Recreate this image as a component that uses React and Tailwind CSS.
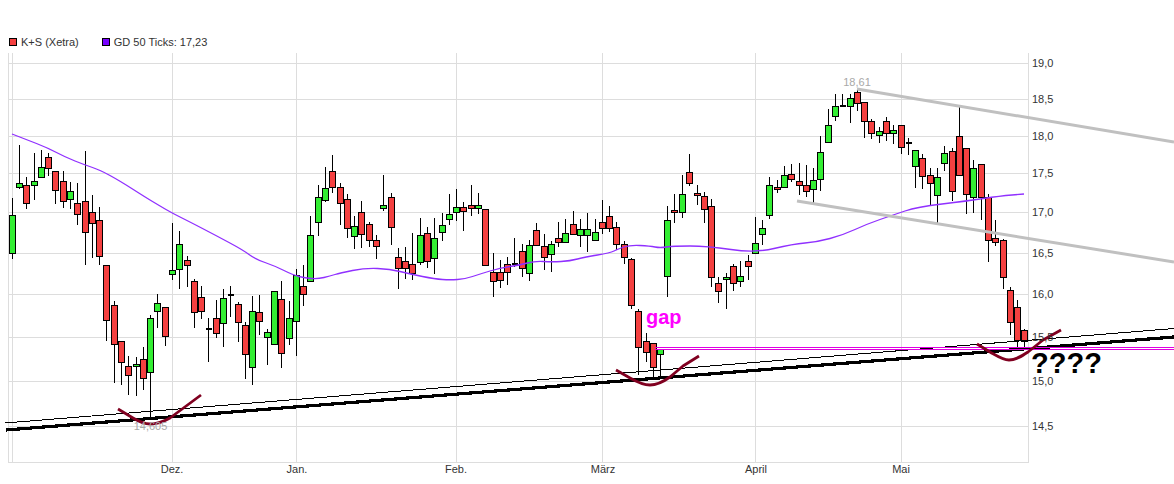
import React from "react";

// x, wick top, wick bottom, body top, body bottom, colour
const candles = [
  [12.5, 198, 259, 215, 253, "g"], [19.5, 145, 189, 183, 187, "g"], [26.5, 177, 209, 185, 203, "r"],
  [34.5, 153, 200, 181, 185, "g"], [41.5, 150, 177, 167, 177, "g"], [48.5, 153, 176, 157, 168, "r"],
  [55.5, 171, 204, 171, 190, "r"], [63.5, 171, 208, 181, 201, "r"], [70.5, 182, 209, 191, 199, "g"],
  [77.5, 183, 225, 203, 214, "r"], [85.5, 151, 265, 201, 232, "r"], [92.5, 195, 258, 212, 223, "r"],
  [99.5, 207, 265, 220, 256, "r"], [106.5, 265, 341, 265, 320, "r"], [114.5, 301, 383, 305, 344, "r"],
  [121.5, 341, 385, 341, 362, "r"], [128.5, 356, 395, 366, 375, "r"], [136.5, 357, 396, 364, 366, "g"],
  [143.5, 347, 390, 359, 378, "r"], [150.5, 315, 418, 318, 372, "g"], [157.5, 294, 328, 303, 311, "g"],
  [165.5, 307, 346, 307, 336, "r"], [172.5, 223, 280, 270, 274, "g"], [179.5, 231, 289, 244, 269, "g"],
  [187.5, 256, 287, 260, 265, "r"], [194.5, 279, 328, 281, 312, "r"], [201.5, 286, 319, 297, 311, "r"],
  [208.5, 318, 362, 329, 329, "d"], [216.5, 300, 338, 318, 333, "r"], [223.5, 289, 347, 298, 323, "g"],
  [230.5, 286, 317, 295, 295, "d"], [238.5, 302, 342, 304, 322, "r"], [245.5, 322, 379, 325, 354, "r"],
  [252.5, 296, 385, 311, 367, "g"], [259.5, 295, 335, 312, 321, "r"], [267.5, 329, 365, 332, 337, "g"],
  [274.5, 291, 344, 291, 344, "g"], [281.5, 281, 368, 299, 353, "r"], [289.5, 301, 345, 318, 338, "g"],
  [296.5, 269, 356, 275, 321, "g"], [303.5, 265, 306, 286, 294, "r"], [310.5, 216, 281, 235, 281, "g"],
  [318.5, 185, 236, 197, 222, "g"], [325.5, 167, 202, 188, 200, "g"], [332.5, 155, 193, 171, 187, "r"],
  [340.5, 183, 225, 187, 203, "r"], [347.5, 194, 238, 199, 228, "r"], [354.5, 216, 249, 226, 236, "g"],
  [361.5, 201, 248, 212, 234, "r"], [369.5, 222, 247, 224, 240, "r"], [376.5, 235, 259, 240, 246, "r"],
  [383.5, 175, 211, 205, 208, "g"], [391.5, 193, 245, 197, 227, "r"], [398.5, 248, 289, 257, 268, "r"],
  [405.5, 247, 279, 261, 268, "r"], [412.5, 233, 280, 264, 273, "r"], [420.5, 218, 265, 235, 262, "g"],
  [427.5, 227, 268, 233, 261, "r"], [434.5, 218, 274, 238, 258, "g"], [442.5, 213, 241, 225, 232, "g"],
  [449.5, 194, 225, 214, 219, "g"], [456.5, 189, 221, 207, 212, "g"], [463.5, 202, 231, 207, 211, "r"],
  [471.5, 185, 216, 205, 208, "r"], [478.5, 193, 214, 205, 208, "g"], [485.5, 209, 265, 209, 265, "r"],
  [493.5, 253, 297, 272, 281, "r"], [500.5, 260, 288, 272, 280, "r"], [507.5, 257, 285, 264, 272, "r"],
  [514.5, 238, 267, 264, 264, "d"], [522.5, 244, 277, 251, 268, "r"], [529.5, 240, 281, 245, 273, "g"],
  [536.5, 223, 245, 230, 245, "r"], [544.5, 234, 270, 246, 257, "r"], [551.5, 241, 272, 244, 254, "g"],
  [558.5, 222, 247, 238, 242, "r"], [565.5, 219, 242, 233, 242, "g"], [573.5, 211, 235, 224, 234, "r"],
  [580.5, 219, 247, 229, 235, "g"], [587.5, 213, 252, 229, 235, "g"], [595.5, 219, 240, 232, 240, "g"],
  [602.5, 200, 234, 222, 228, "r"], [609.5, 206, 232, 216, 228, "r"], [616.5, 222, 250, 227, 244, "r"],
  [624.5, 241, 264, 244, 257, "r"], [631.5, 258, 309, 259, 305, "r"], [638.5, 309, 375, 311, 347, "r"],
  [646.5, 333, 362, 341, 352, "r"], [653.5, 343, 378, 343, 367, "r"], [660.5, 349, 377, 349, 354, "g"],
  [667.5, 206, 297, 220, 276, "g"], [674.5, 194, 223, 210, 212, "r"], [682.5, 175, 218, 194, 212, "g"],
  [689.5, 154, 186, 172, 183, "r"], [697.5, 185, 205, 193, 195, "r"], [704.5, 192, 223, 196, 209, "r"],
  [711.5, 199, 287, 206, 277, "r"], [718.5, 277, 303, 283, 291, "r"], [726.5, 273, 309, 277, 279, "g"],
  [733.5, 264, 291, 266, 283, "r"], [740.5, 261, 287, 276, 281, "g"], [748.5, 255, 280, 261, 266, "r"],
  [755.5, 217, 253, 243, 253, "g"], [762.5, 220, 245, 228, 234, "g"], [769.5, 177, 219, 185, 215, "g"],
  [777.5, 180, 193, 187, 189, "r"], [784.5, 166, 188, 175, 187, "g"], [791.5, 164, 182, 174, 179, "r"],
  [799.5, 163, 195, 181, 185, "r"], [806.5, 165, 197, 185, 191, "r"], [813.5, 168, 203, 180, 189, "g"],
  [820.5, 136, 191, 152, 179, "g"], [828.5, 109, 142, 125, 142, "g"], [835.5, 94, 121, 106, 116, "g"],
  [842.5, 94, 106, 106, 106, "d"], [850.5, 94, 123, 98, 106, "g"], [857.5, 90, 111, 92, 103, "r"],
  [864.5, 102, 138, 102, 121, "r"], [871.5, 119, 139, 121, 133, "r"], [879.5, 127, 143, 131, 135, "g"],
  [886.5, 117, 141, 121, 133, "r"], [893.5, 125, 144, 130, 133, "g"], [901.5, 125, 154, 125, 147, "r"],
  [908.5, 138, 155, 143, 143, "d"], [915.5, 150, 188, 150, 166, "g"], [922.5, 154, 189, 158, 176, "r"],
  [930.5, 168, 206, 175, 183, "r"], [937.5, 168, 223, 177, 195, "g"], [944.5, 146, 171, 153, 163, "g"],
  [952.5, 148, 201, 151, 191, "r"], [959.5, 107, 176, 136, 175, "r"], [966.5, 148, 214, 148, 194, "r"],
  [973.5, 160, 213, 168, 197, "g"], [981.5, 164, 220, 164, 197, "r"], [988.5, 194, 262, 197, 240, "r"],
  [995.5, 220, 246, 238, 242, "r"], [1003.5, 239, 289, 240, 277, "r"], [1010.5, 287, 335, 290, 322, "r"],
  [1017.5, 300, 347, 307, 340, "r"], [1024.5, 329, 347, 330, 341, "r"],
];

const gridY = [63.5, 99.5, 136.5, 173.5, 212.5, 253.5, 294.5, 337.5, 381.5, 426.5];
const gridX = [12.5, 172.5, 296.5, 456.5, 602.5, 755.5, 901.5];
const prices = ["19,0", "18,5", "18,0", "17,5", "17,0", "16,5", "16,0", "15,5", "15,0", "14,5"];
const months = [["Dez.", 172], ["Jan.", 297], ["Feb.", 456], ["März", 603], ["April", 756], ["Mai", 901]];

const ma = [
  [12, 134], [25, 139], [48, 148], [65, 157], [85, 165], [100, 170], [120, 181], [145, 197], [160, 206],
  [172, 213], [190, 222], [215, 235], [243, 250], [255, 259], [275, 266], [293, 275], [305, 278], [318, 279],
  [330, 276], [340, 273], [365, 268], [390, 269], [410, 274], [435, 279], [450, 280], [465, 279], [480, 274],
  [500, 268], [520, 265], [535, 261], [552, 262], [570, 261], [585, 257], [610, 253], [618, 249], [630, 245],
  [650, 246], [660, 248], [673, 246], [707, 246], [755, 253], [793, 244], [817, 242], [843, 235], [867, 224],
  [893, 215], [917, 207], [967, 201], [1000, 196], [1024, 194],
];

// rounds the corners of the average line through the midpoints
const smooth = (pts) => {
  let d = `M${pts[0][0]} ${pts[0][1]}`;
  for (let i = 1; i < pts.length - 1; i++) {
    const mx = (pts[i][0] + pts[i + 1][0]) / 2;
    const my = (pts[i][1] + pts[i + 1][1]) / 2;
    d += ` Q${pts[i][0]} ${pts[i][1]} ${mx} ${my}`;
  }
  const last = pts[pts.length - 1];
  return `${d} L${last[0]} ${last[1]}`;
};

const curves = [
  "M118 409 L133 418 C138 421 143 424 150 424 C157 424 163 422 170 418 L201 395",
  "M616 370 L630 378 C637 382 644 385 650 385 C657 385 663 382 670 377 L683 366 L699 356",
  "M977 344 L990 352 C997 356 1003 360 1009 360 C1016 360 1022 356 1028 352 L1043 340 L1061 330",
];

function Candle({ c }) {
  const [x, hi, lo, top, bottom, kind] = c;
  if (kind === "d") {
    return (
      <g stroke="#000" shapeRendering="crispEdges">
        <line x1={x} x2={x} y1={hi} y2={lo} />
        <line x1={x - 3} x2={x + 3} y1={top} y2={top} strokeWidth="2" />
      </g>
    );
  }
  return (
    <g stroke="#000" shapeRendering="crispEdges">
      <line x1={x} x2={x} y1={hi} y2={lo} />
      <rect
        x={x - 3}
        y={top + 0.5}
        width="6"
        height={bottom - top}
        fill={kind === "r" ? "#f44040" : "#33ee33"}
      />
    </g>
  );
}

function LegendItem({ color, label }) {
  return (
    <div className="flex items-center gap-[4px]">
      <span className="w-[8px] h-[8px] border border-black" style={{ backgroundColor: color }} />
      <span>{label}</span>
    </div>
  );
}

export default function App() {
  return (
    <div className="w-[1174px] h-[484px] bg-white overflow-hidden font-['Liberation_Sans',Arial,sans-serif] text-[#333]">
      <div className="h-[53px] pt-[35px] pl-[9px] flex items-start gap-[23px] text-[11px] leading-[14px]">
        <LegendItem color="#f44040" label="K+S (Xetra)" />
        <LegendItem color="#7700ff" label="GD 50 Ticks: 17,23" />
      </div>
      <svg width="1174" height="431" viewBox="0 53 1174 431" fontFamily="'Liberation Sans', Arial, sans-serif">
        <g stroke="#ddd" shapeRendering="crispEdges">
          {gridY.map((y) => (
            <line key={y} x1="9" x2="1028" y1={y} y2={y} />
          ))}
          {gridX.map((x) => (
            <line key={x} x1={x} x2={x} y1="53" y2="462" />
          ))}
          <rect x="8.5" y="52.5" width="1020" height="410" fill="none" />
        </g>

        {candles.map((c) => (
          <Candle key={c[0]} c={c} />
        ))}

        <path d={smooth(ma)} fill="none" stroke="#9030ff" strokeWidth="1.3" />

        <g stroke="#000" shapeRendering="crispEdges">
          <line x1="5" y1="423" x2="1174" y2="328.5" />
          <line x1="6" y1="430" x2="1174" y2="337" strokeWidth="3.2" />
        </g>
        <g stroke="#c0c0c0" strokeWidth="3">
          <line x1="857" y1="89" x2="1174" y2="142" />
          <line x1="797" y1="201" x2="1174" y2="262" />
        </g>
        <g fill="none" stroke="#e000e0" shapeRendering="crispEdges">
          <line x1="655" x2="1174" y1="347.5" y2="347.5" />
          <line x1="655" x2="1174" y1="349.5" y2="349.5" />
        </g>
        <g fill="none" stroke="#800020" strokeWidth="2.8" strokeLinejoin="round">
          {curves.map((d) => (
            <path key={d} d={d} />
          ))}
        </g>

        <g fill="#333" fontSize="11">
          {prices.map((p, i) => (
            <text key={p} x="1032" y={gridY[i] + 3.5}>{p}</text>
          ))}
          {months.map(([m, x]) => (
            <text key={m} x={x} y="473" textAnchor="middle">{m}</text>
          ))}
        </g>
        <g fill="#a8a8a8" fontSize="11" textAnchor="middle">
          <text x="857" y="86">18,61</text>
          <text x="150.5" y="430">14,605</text>
        </g>
        <text x="646" y="324" fontSize="20" fontWeight="700" fill="#ff00ff">gap</text>
        <text x="1031" y="373" fontSize="29" fontWeight="700" fill="#000">????</text>
      </svg>
    </div>
  );
}
